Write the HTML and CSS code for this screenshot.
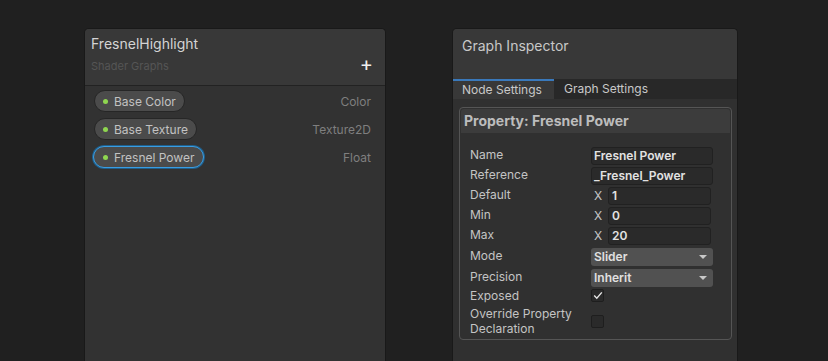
FILE: index.html
```html
<!DOCTYPE html>
<html>
<head>
<meta charset="utf-8">
<link rel="stylesheet" href="styles.css">
</head>
<body>
<div class="stage">
  <section class="panel blackboard">
    <header class="bb-head">
      <div class="bb-title">FresnelHighlight</div>
      <div class="bb-sub-row">
        <span class="bb-sub">Shader Graphs</span>
        <span class="plus">+</span>
      </div>
    </header>
    <div class="bb-list">
      <div class="bb-row">
        <span class="pill"><span class="dot"></span>Base Color</span>
        <span class="type">Color</span>
      </div>
      <div class="bb-row">
        <span class="pill"><span class="dot"></span>Base Texture</span>
        <span class="type">Texture2D</span>
      </div>
      <div class="bb-row">
        <span class="pill selected"><span class="dot"></span>Fresnel Power</span>
        <span class="type">Float</span>
      </div>
    </div>
  </section>

  <section class="panel inspector">
    <header class="gi-head">Graph Inspector</header>
    <div class="tabs">
      <div class="tab active">Node Settings</div>
      <div class="tab">Graph Settings</div>
    </div>
    <div class="gi-content">
      <div class="prop-box">
        <div class="prop-title">Property: Fresnel Power</div>
        <div class="prop-grid">
          <div class="lbl">Name</div>
          <div class="field text">Fresnel Power</div>
          <div class="lbl">Reference</div>
          <div class="field text">_Fresnel_Power</div>
          <div class="lbl">Default</div>
          <div class="vec"><span class="x">X</span><span class="field num">1</span></div>
          <div class="lbl">Min</div>
          <div class="vec"><span class="x">X</span><span class="field num">0</span></div>
          <div class="lbl">Max</div>
          <div class="vec"><span class="x">X</span><span class="field num">20</span></div>
          <div class="lbl gap">Mode</div>
          <div class="drop gap">Slider<span class="caret"></span></div>
          <div class="lbl gap">Precision</div>
          <div class="drop gap">Inherit<span class="caret"></span></div>
          <div class="lbl exp">Exposed</div>
          <div class="chk-cell"><span class="chk"><svg width="10" height="9" viewBox="0 0 10 9"><path d="M1.2 4.6 L3.8 7.2 L8.8 1.4" fill="none" stroke="#e6e6e6" stroke-width="1.4"/></svg></span></div>
          <div class="lbl two">Override Property<br>Declaration</div>
          <div class="chk-cell late"><span class="chk"></span></div>
        </div>
      </div>
    </div>
  </section>
</div>
</body>
</html>
```

FILE: styles.css
```css
html, body {
  margin: 0;
  padding: 0;
  background: #202020;
  overflow: hidden;
  font-family: Inter, "Noto Sans", sans-serif;
}

.stage {
  display: flex;
  align-items: flex-start;
  gap: 66px;
  padding: 28px 0 0 84px;
}

.panel {
  box-sizing: border-box;
  border: 1px solid #191919;
  border-bottom: none;
  border-radius: 5px 5px 0 0;
  height: 340px;
  overflow: hidden;
}

/* Blackboard */
.blackboard {
  width: 302px;
  background: #323232;
}

.bb-head {
  background: #383838;
  height: 57px;
  box-sizing: border-box;
  border-bottom: 1px solid #222;
  padding: 6px 12px 0 6px;
}

.bb-title {
  font-size: 14px;
  color: #d4d4d4;
  line-height: 18px;
}

.bb-sub-row {
  display: flex;
  justify-content: space-between;
  align-items: flex-start;
  margin-top: 4px;
}

.bb-sub {
  font-size: 11px;
  color: #555555;
  line-height: 14px;
  padding-top: 2px;
}

.plus {
  font-size: 20px;
  color: #f0f0f0;
  line-height: 14px;
  font-weight: 400;
}

.bb-list {
  padding: 4px 14px 0 8px;
  display: flex;
  flex-direction: column;
  gap: 6px;
}

.bb-row {
  display: flex;
  justify-content: space-between;
  align-items: center;
  height: 22px;
}

.pill {
  display: inline-flex;
  align-items: center;
  height: 22px;
  box-sizing: border-box;
  padding: 0 8px 0 8px;
  border-radius: 11px;
  background: #4b4b4b;
  border: 1px solid #262626;
  color: #c2c2c2;
  font-size: 12px;
  margin-left: 1px;
}

.pill.selected {
  border: 1px solid #3a9de2;
  box-shadow: 0 0 0 1px #1f5f8c;
  margin-left: 0;
  padding: 0 9px 0 9px;
}

.dot {
  width: 5px;
  height: 5px;
  border-radius: 50%;
  background: #8fd650;
  margin-right: 6px;
}

.type {
  color: #7f7f7f;
  font-size: 12px;
}

/* Inspector */
.inspector {
  width: 286px;
  background: #303030;
}

.gi-head {
  background: #383838;
  height: 50px;
  box-sizing: border-box;
  padding: 8px 10px 0 9px;
  font-size: 14px;
  color: #c8c8c8;
  line-height: 18px;
}

.tabs {
  display: flex;
  background: #282828;
  height: 20px;
}

.tab {
  font-size: 12px;
  color: #c8c8c8;
  padding: 0 10px;
  line-height: 20px;
  box-sizing: border-box;
}

.tab.active {
  background: #383838;
  border-top: 2px solid #3a79bb;
  line-height: 18px;
  width: 101px;
  padding-left: 9px;
}

.gi-content {
  padding: 8px 5px 0 6px;
}

.prop-box {
  border: 1px solid #555;
  border-radius: 4px;
  height: 233px;
  box-sizing: border-box;
  overflow: hidden;
}

.prop-title {
  background: #3c3c3c;
  margin: 1px 1px 0 1px;
  border-radius: 3px 3px 0 0;
  height: 24px;
  box-sizing: border-box;
  padding: 3px 4px 0 3px;
  font-size: 14px;
  font-weight: 700;
  color: #bdbdbd;
  line-height: 18px;
}

.prop-grid {
  display: grid;
  grid-template-columns: 121px 122px;
  grid-template-rows: 20px 20px 20px 20px 20px 21px 21px 20px 30px;
  padding: 14px 0 0 10px;
}

.lbl {
  font-size: 12px;
  color: #c4c4c4;
  line-height: 14px;
  align-self: start;
  padding-top: 1px;
}

.lbl.exp {
  padding-top: 0;
}

.lbl.two {
  line-height: 15px;
  padding-top: 0;
  margin-top: -3px;
}

.field {
  box-sizing: border-box;
  height: 18px;
  background: #2a2a2a;
  border: 1px solid #212121;
  border-radius: 3px;
  font-size: 12px;
  color: #e2e2e2;
  font-weight: 600;
  line-height: 16px;
  padding: 0 2px;
  display: block;
  align-self: start;
}

.vec {
  display: flex;
  align-items: center;
  align-self: start;
}

.x {
  font-size: 12px;
  color: #c4c4c4;
  width: 17px;
  padding-left: 3px;
  box-sizing: border-box;
  line-height: 18px;
}

.vec .field {
  width: 103px;
  padding-left: 3px;
}

.gap {
  margin-top: 1px;
}

.drop {
  position: relative;
  box-sizing: border-box;
  height: 18px;
  background: #515151;
  border-radius: 3px;
  font-size: 12px;
  font-weight: 600;
  color: #e0e0e0;
  line-height: 18px;
  padding-left: 3px;
  align-self: start;
}

.caret {
  position: absolute;
  right: 6px;
  top: 7px;
  width: 0;
  height: 0;
  border-left: 4px solid transparent;
  border-right: 4px solid transparent;
  border-top: 4px solid #c8c8c8;
}

.chk-cell {
  display: flex;
  align-items: center;
  align-self: start;
}

.chk-cell.late {
  padding-top: 6px;
}

.chk {
  width: 13px;
  height: 13px;
  box-sizing: border-box;
  background: #2a2a2a;
  border: 1px solid #1e1e1e;
  border-radius: 2px;
  display: flex;
  align-items: center;
  justify-content: center;
}
```
